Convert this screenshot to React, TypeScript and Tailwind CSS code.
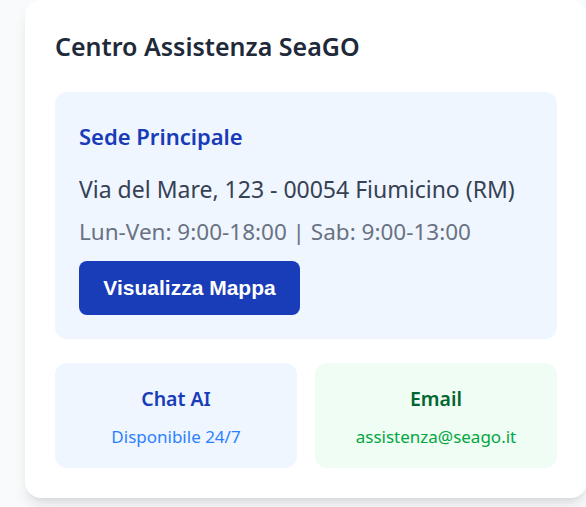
import React from "react";

export default function App() {
  return (
    <div className="min-h-screen bg-gray-50 pl-[25px] font-['Noto_Sans',sans-serif]">
      <div className="w-[562px] rounded-2xl bg-white p-[30px] shadow-lg">
        <h2 className="text-[25px] font-semibold leading-8 text-gray-800">Centro Assistenza SeaGO</h2>
        <div className="mt-[30px] rounded-xl bg-blue-50 p-6">
          <h3 className="text-[22px] font-semibold leading-[40px] text-blue-800">Sede Principale</h3>
          <p className="mt-[17px] text-[23px] leading-8 text-gray-700">Via del Mare, 123 - 00054 Fiumicino (RM)</p>
          <p className="mt-[11px] text-[22.5px] leading-8 text-gray-500">Lun-Ven: 9:00-18:00 | Sab: 9:00-13:00</p>
          <button className="mt-[13px] h-[54px] w-[221px] rounded-lg bg-blue-800 font-['Liberation_Sans',Arial,sans-serif] text-[21px] font-bold text-white">
            Visualizza Mappa
          </button>
        </div>
        <div className="mt-6 grid grid-cols-2 gap-[18px]">
          <div className="rounded-xl bg-blue-50 pt-6 pb-[19px] text-center">
            <h4 className="text-[19.5px] font-semibold leading-6 text-blue-800">Chat AI</h4>
            <p className="mt-[14px] text-[17px] leading-6 text-blue-500">Disponibile 24/7</p>
          </div>
          <div className="rounded-xl bg-green-50 pt-6 pb-[19px] text-center">
            <h4 className="text-[19.5px] font-semibold leading-6 text-green-800">Email</h4>
            <p className="mt-[14px] text-[17px] leading-6 text-green-600">assistenza@seago.it</p>
          </div>
        </div>
      </div>
    </div>
  );
}
